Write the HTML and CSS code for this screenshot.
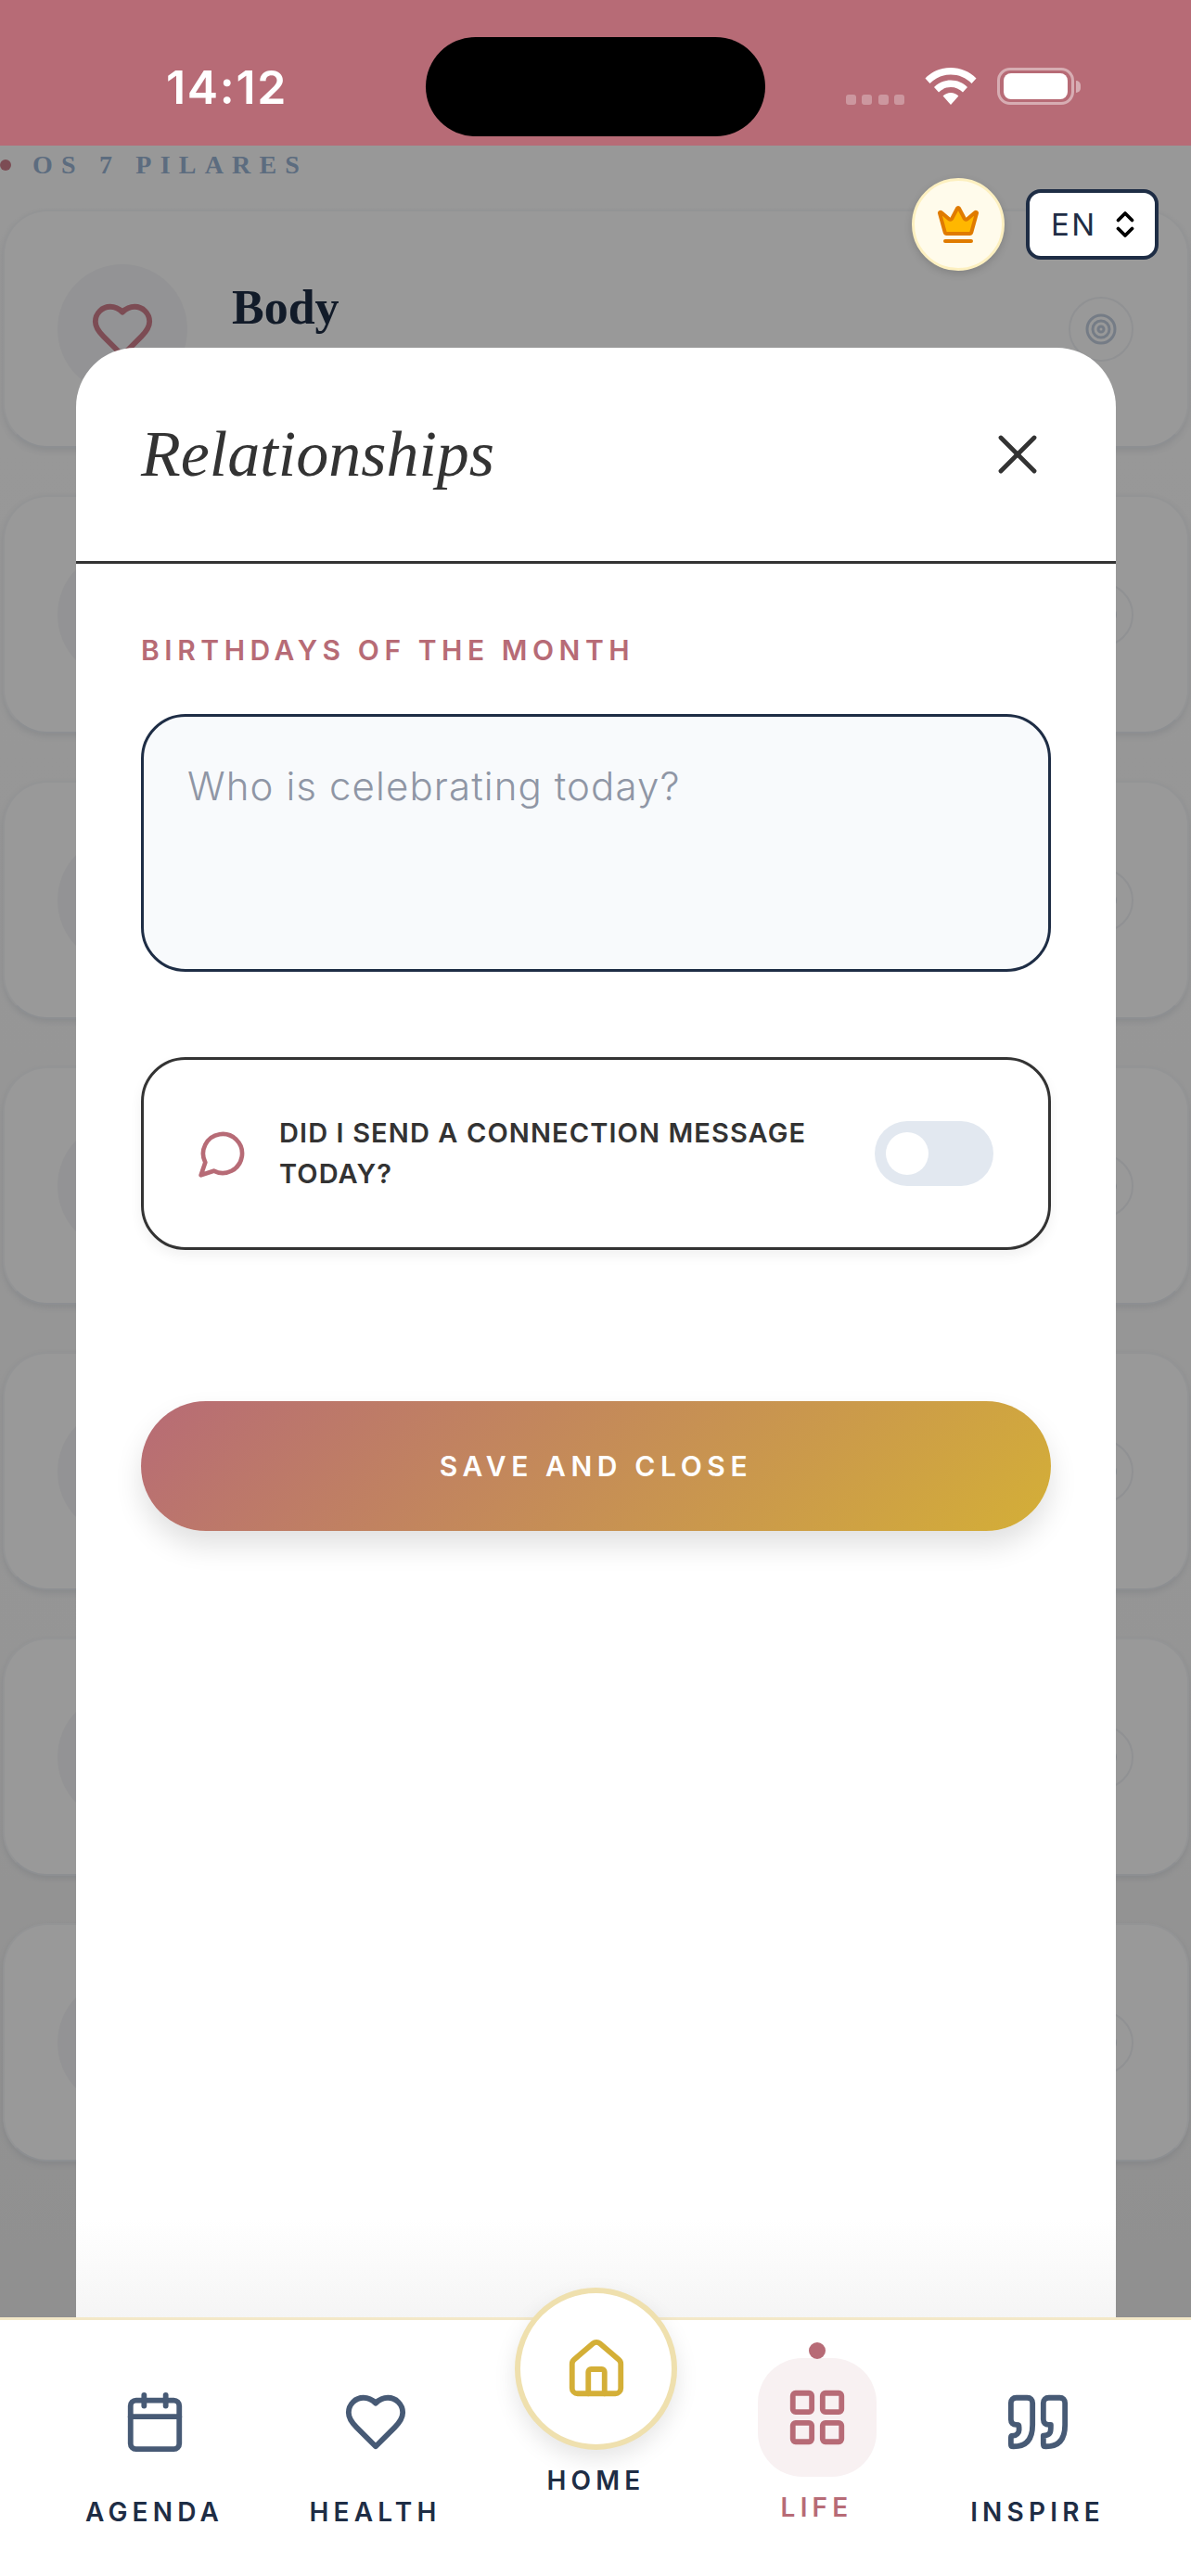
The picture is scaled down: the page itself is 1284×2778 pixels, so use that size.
FILE: index.html
```html
<!DOCTYPE html>
<html lang="en">
<head>
<meta charset="utf-8">
<title>Relationships</title>
<link rel="stylesheet" href="styles.css">
</head>
<body>
<div class="app">
  <header class="status">
    <span class="clock">14:12</span>
    <div class="island"></div>
    <div class="status-icons">
      <div class="signal"><i></i><i></i><i></i><i></i></div>
      <svg class="wifi" viewBox="0 0 56 40"><path d="M28 0C17.500 0 8 4 0.500 11.500L5.500 17C11.500 10.800 19.500 7.500 28 7.500S44.500 10.800 50.500 17L55.500 11.500C48 4 38.500 0 28 0Z"/><path d="M28 13.500C21 13.500 14.800 16.200 10 21L15 26.500C18.500 23 23 21 28 21S37.500 23 41 26.500L46 21C41.200 16.200 35 13.500 28 13.500Z"/><path d="M28 27C24.800 27 22 28.200 19.600 30.500L28 40L36.400 30.500C34 28.200 31.200 27 28 27Z"/></svg>
      <div class="battery"><div class="battery-fill"></div></div>
      <div class="battery-tip"></div>
    </div>
  </header>

  <main class="stage">
    <section class="pillars">
      <div class="pillars-title"><span class="pillars-dot"></span><span>OS 7 PILARES</span></div>
      <article class="pillar">
        <div class="pillar-icon"><svg class="ico-70 rose-dark" viewBox="0 0 24 24"><path d="M19 14c1.490-1.460 3-3.210 3-5.500A5.500 5.500 0 0 0 16.500 3c-1.760 0-3 .5-4.500 2-1.500-1.500-2.740-2-4.500-2A5.500 5.500 0 0 0 2 8.500c0 2.300 1.500 4.050 3 5.500l7 7Z"/></svg></div>
        <h2 class="pillar-name">Body</h2>
        <div class="pillar-goal"><svg class="ico-36" viewBox="0 0 24 24"><circle cx="12" cy="12" r="10"/><circle cx="12" cy="12" r="6"/><circle cx="12" cy="12" r="2"/></svg></div>
      </article>
      <article class="pillar"><div class="pillar-icon"></div><div class="pillar-fill"></div><div class="pillar-goal"><svg class="ico-36" viewBox="0 0 24 24"><circle cx="12" cy="12" r="10"/><circle cx="12" cy="12" r="6"/><circle cx="12" cy="12" r="2"/></svg></div></article>
      <article class="pillar"><div class="pillar-icon"></div><div class="pillar-fill"></div><div class="pillar-goal"><svg class="ico-36" viewBox="0 0 24 24"><circle cx="12" cy="12" r="10"/><circle cx="12" cy="12" r="6"/><circle cx="12" cy="12" r="2"/></svg></div></article>
      <article class="pillar"><div class="pillar-icon"></div><div class="pillar-fill"></div><div class="pillar-goal"><svg class="ico-36" viewBox="0 0 24 24"><circle cx="12" cy="12" r="10"/><circle cx="12" cy="12" r="6"/><circle cx="12" cy="12" r="2"/></svg></div></article>
      <article class="pillar"><div class="pillar-icon"></div><div class="pillar-fill"></div><div class="pillar-goal"><svg class="ico-36" viewBox="0 0 24 24"><circle cx="12" cy="12" r="10"/><circle cx="12" cy="12" r="6"/><circle cx="12" cy="12" r="2"/></svg></div></article>
      <article class="pillar"><div class="pillar-icon"></div><div class="pillar-fill"></div><div class="pillar-goal"><svg class="ico-36" viewBox="0 0 24 24"><circle cx="12" cy="12" r="10"/><circle cx="12" cy="12" r="6"/><circle cx="12" cy="12" r="2"/></svg></div></article>
      <article class="pillar"><div class="pillar-icon"></div><div class="pillar-fill"></div><div class="pillar-goal"><svg class="ico-36" viewBox="0 0 24 24"><circle cx="12" cy="12" r="10"/><circle cx="12" cy="12" r="6"/><circle cx="12" cy="12" r="2"/></svg></div></article>
    </section>

    <div class="scrim"></div>

    <div class="top-actions">
      <button class="crown-btn" type="button"><svg class="crown" viewBox="0 0 24 24"><path d="M11.562 3.266a.5.5 0 0 1 .876 0L15.390 8.870a1 1 0 0 0 1.516.294L21.183 5.500a.5.5 0 0 1 .798.519l-2.834 10.246a1 1 0 0 1-.956.734H5.810a1 1 0 0 1-.957-.734L2.020 6.020a.5.5 0 0 1 .798-.519l4.276 3.664a1 1 0 0 0 1.516-.294z"/><path d="M5 21h14"/></svg></button>
      <button class="lang" type="button"><span>EN</span><svg class="chev" viewBox="0 0 24 24"><path d="m7 15 5 5 5-5"/><path d="m7 9 5-5 5 5"/></svg></button>
    </div>

    <div class="modal-wrap">
      <div class="modal">
        <div class="modal-head">
          <h1 class="modal-title">Relationships</h1>
          <svg class="close" viewBox="0 0 24 24"><path d="M18 6 6 18"/><path d="m6 6 12 12"/></svg>
        </div>
        <div class="modal-body">
          <div class="field-label">BIRTHDAYS OF THE MONTH</div>
          <div class="note">Who is celebrating today?</div>
          <div class="check-card">
            <svg class="chat" viewBox="0 0 24 24"><path d="M7.900 20A9 9 0 1 0 4 16.100L2 22Z"/></svg>
            <div class="check-text">DID I SEND A CONNECTION MESSAGE TODAY?</div>
            <div class="toggle"><span class="knob"></span></div>
          </div>
          <button class="save" type="button">SAVE AND CLOSE</button>
        </div>
      </div>
    </div>
  </main>

  <nav class="tabs">
    <div class="tab">
      <svg class="ico-70 slate" viewBox="0 0 24 24"><rect x="3" y="4" width="18" height="18" rx="2"/><path d="M16 2v4"/><path d="M8 2v4"/><path d="M3 10h18"/></svg>
      <span class="tab-label">AGENDA</span>
    </div>
    <div class="tab">
      <svg class="ico-70 slate" viewBox="0 0 24 24"><path d="M19 14c1.490-1.460 3-3.210 3-5.500A5.500 5.500 0 0 0 16.500 3c-1.760 0-3 .5-4.500 2-1.500-1.500-2.740-2-4.500-2A5.500 5.500 0 0 0 2 8.500c0 2.300 1.500 4.050 3 5.500l7 7Z"/></svg>
      <span class="tab-label">HEALTH</span>
    </div>
    <div class="tab tab-home">
      <div class="home-disc"><svg class="ico-70 gold" viewBox="0 0 24 24"><path d="M15 21v-8a1 1 0 0 0-1-1h-4a1 1 0 0 0-1 1v8"/><path d="M3 10a2 2 0 0 1 .709-1.528l7-5.999a2 2 0 0 1 2.582 0l7 5.999A2 2 0 0 1 21 10v9a2 2 0 0 1-2 2H5a2 2 0 0 1-2-2z"/></svg></div>
      <span class="tab-label">HOME</span>
    </div>
    <div class="tab tab-life">
      <span class="life-dot"></span>
      <div class="life-tile"><svg class="ico-70 rose" viewBox="0 0 24 24"><rect x="3" y="3" width="7" height="7" rx="1"/><rect x="14" y="3" width="7" height="7" rx="1"/><rect x="14" y="14" width="7" height="7" rx="1"/><rect x="3" y="14" width="7" height="7" rx="1"/></svg></div>
      <span class="tab-label life-label">LIFE</span>
    </div>
    <div class="tab">
      <svg class="ico-70 slate" viewBox="0 0 24 24"><path d="M3 21c3 0 7-1 7-8V5c0-1.250-.756-2.017-2-2H4c-1.250 0-2 .75-2 1.972V11c0 1.250.75 2 2 2 1 0 1 0 1 1v1c0 1-1 2-2 2s-1 .008-1 1.031V20c0 1 0 1 1 1z"/><path d="M15 21c3 0 7-1 7-8V5c0-1.250-.757-2.017-2-2h-4c-1.250 0-2 .75-2 1.972V11c0 1.250.75 2 2 2h.75c0 2.250.25 4-2.750 4v3c0 1 0 1 1 1z"/></svg>
      <span class="tab-label">INSPIRE</span>
    </div>
  </nav>
</div>
</body>
</html>
```
FILE: styles.css
```css
* { box-sizing: border-box; }
html, body { margin: 0; padding: 0; }
body { width: 1284px; height: 2778px; overflow: hidden; font-family: Inter, "Liberation Sans", sans-serif; }
svg { display: block; fill: none; stroke: currentColor; stroke-width: 2; stroke-linecap: round; stroke-linejoin: round; flex: none; }
button { font: inherit; margin: 0; cursor: pointer; }

.app { width: 1284px; height: 2778px; display: flex; flex-direction: column; background: #fff; }

/* status bar */
.status { height: 157px; flex: none; background: #b76b76; position: relative; display: flex; align-items: flex-start; justify-content: space-between; }
.clock { margin: 71px 0 0 179px; color: #fff; font: 600 50px/46px Inter, sans-serif; letter-spacing: 1.700px; }
.island { position: absolute; left: 459px; top: 40px; width: 366px; height: 107px; border-radius: 54px; background: #000; }
.status-icons { display: flex; align-items: flex-start; margin: 73px 119px 0 0; }
.signal { display: flex; gap: 6.500px; margin-top: 29px; }
.signal i { width: 11px; height: 11px; border-radius: 3px; background: rgba(255,255,255,.3); }
.wifi { width: 56px; height: 40px; margin-left: 22px; fill: #fff; stroke: none; }
.battery { width: 83px; height: 40px; margin-left: 22px; border: 3px solid rgba(255,255,255,.45); border-radius: 14px; padding: 3px 4px; }
.battery-fill { height: 100%; background: #fff; border-radius: 8px; }
.battery-tip { width: 5px; height: 13px; margin: 14px 0 0 2px; background: rgba(255,255,255,.45); border-radius: 0 5px 5px 0; }

/* dimmed pillar list */
.stage { flex: 1; position: relative; overflow: hidden; background: linear-gradient(to bottom, #fefefe, #f9f9f9 70%, #f0f0f0); }
.pillars { display: flex; flex-direction: column; gap: 51px; padding: 0 2px 0 3px; height: 100%; }
.pillars-title { display: flex; align-items: center; gap: 23px; height: 69px; margin: 0 -2px -51px -3px; padding-bottom: 28px; font: 700 28px/42px "Liberation Serif", serif; letter-spacing: 9.200px; color: #9ab4d4; }
.pillars-dot { width: 12px; height: 12px; border-radius: 50%; background: #cf7f8d; }
.pillar { height: 257px; flex: none; display: flex; align-items: center; border-radius: 48px; background: #fff; border: 2px solid #f6f7f9; border-bottom-color: #eceff3; box-shadow: 0 3px 7px rgba(71,90,117,.12); padding: 0 58px 0 57px; }
.pillar-icon { width: 140px; height: 140px; border-radius: 50%; background: #f5f6f8; display: flex; align-items: center; justify-content: center; flex: none; padding-top: 5px; }
.pillar-name { margin: 0 0 46px 48px; flex: 1; font: 700 52px/60px "Liberation Serif", serif; color: #1e2d45; }
.pillar-fill { flex: 1; }
.pillar-goal { width: 70px; height: 70px; border-radius: 50%; border: 2px solid #f0f2f6; color: #c3cfdf; display: flex; align-items: center; justify-content: center; }
.ico-36 { width: 36px; height: 36px; }
.ico-70 { width: 70px; height: 70px; }
.rose-dark { color: #cf7f8d; }
.slate { color: #475a75; }
.gold { color: #d4af37; }
.rose { color: #b76b76; }

.scrim { position: absolute; inset: 0; background: rgba(0,0,0,.4); }

/* floating actions */
.top-actions { position: absolute; top: 35px; right: 35px; display: flex; align-items: center; gap: 23px; z-index: 3; }
.crown-btn { width: 100px; height: 100px; border-radius: 50%; background: #fffbeb; border: 3px solid #fdf0c0; box-shadow: 0 3px 8px rgba(0,0,0,.15); display: flex; align-items: center; justify-content: center; padding: 0; }
.crown { width: 48px; height: 48px; color: #e07b00; fill: #ffb700; }
.lang { width: 143px; height: 76px; background: #fff; border: 4px solid #1e2d45; border-radius: 16px; display: flex; align-items: center; padding: 0 0 0 23px; color: #1e2d45; font: 400 33px/40px Inter, sans-serif; letter-spacing: 2.500px; }
.chev { width: 36px; height: 36px; margin-left: 12px; color: #000; stroke-width: 2.500; fill: none; }

/* modal */
.modal-wrap { position: absolute; inset: 218px 81px 0 82px; z-index: 2; }
.modal { height: 100%; background: linear-gradient(to bottom, #fff 95%, #f5f5f5 100%); border-radius: 64px 64px 0 0; }
.modal-head { height: 233px; border-bottom: 3px solid #333; padding: 0 70px; display: flex; align-items: center; justify-content: space-between; }
.modal-title { margin: 0; font: italic 400 70px/80px "Liberation Serif", serif; color: #333; }
.close { width: 72px; height: 72px; color: #333; stroke-width: 1.600; }
.modal-body { padding: 0 70px; }
.field-label { margin-top: 75px; color: #b76b76; font: 600 30px/36px Inter, sans-serif; letter-spacing: 5.550px; }
.note { height: 278px; margin-top: 51px; padding: 50px 47px; background: #f8fafc; border: 3px solid #1e2d45; border-radius: 48px; color: #8f96a5; font: 300 42px/50px Inter, sans-serif; letter-spacing: 1.100px; }
.check-card { height: 208px; margin-top: 92px; border: 3px solid #333; border-radius: 48px; box-shadow: 0 6px 14px rgba(0,0,0,.06); display: flex; align-items: center; padding: 0 59px 0 57px; }
.chat { width: 56px; height: 56px; color: #b76b76; }
.check-text { width: 600px; margin-left: 33px; color: #333; font: 600 29px/44px Inter, sans-serif; letter-spacing: 1.100px; }
.toggle { width: 128px; height: 70px; margin-left: auto; border-radius: 35px; background: #e2e8f0; padding: 12px; }
.knob { display: block; width: 46px; height: 46px; border-radius: 50%; background: #fff; }
.save { display: block; width: 100%; height: 140px; margin-top: 163px; border: 0; border-radius: 70px; background: linear-gradient(135deg, #b76b76, #d4af37); box-shadow: 0 16px 30px rgba(0,0,0,.12); color: #fff; font: 600 30px/36px Inter, sans-serif; letter-spacing: 5.600px; }

/* bottom navigation */
.tabs { height: 279px; flex: none; position: relative; z-index: 4; background: #fff; border-top: 3px solid #f3e8c8; display: flex; padding: 0 46px 0 47.500px; }
.tab { width: 238px; display: flex; flex-direction: column; align-items: center; padding-top: 75px; }
.tab-label { margin-top: 45px; color: #1e2d45; font: 600 28px/34px Inter, sans-serif; letter-spacing: 5.200px; }
.tab-home { padding-top: 0; }
.home-disc { width: 175px; height: 175px; margin-top: -35px; border-radius: 50%; border: 6px solid #efe0ae; background: #fff; box-shadow: 0 10px 24px rgba(0,0,0,.1); display: flex; align-items: center; justify-content: center; }
.tab-home .tab-label { margin-top: 16px; }
.tab-life { padding-top: 0; position: relative; }
.life-dot { position: absolute; top: 24px; left: 110px; width: 18px; height: 18px; border-radius: 50%; background: #b76b76; }
.life-tile { width: 128px; height: 128px; margin-top: 41px; border-radius: 48px; background: #f8f1f2; display: flex; align-items: center; justify-content: center; }
.life-label { margin-top: 16px; color: #b76b76; }
```
